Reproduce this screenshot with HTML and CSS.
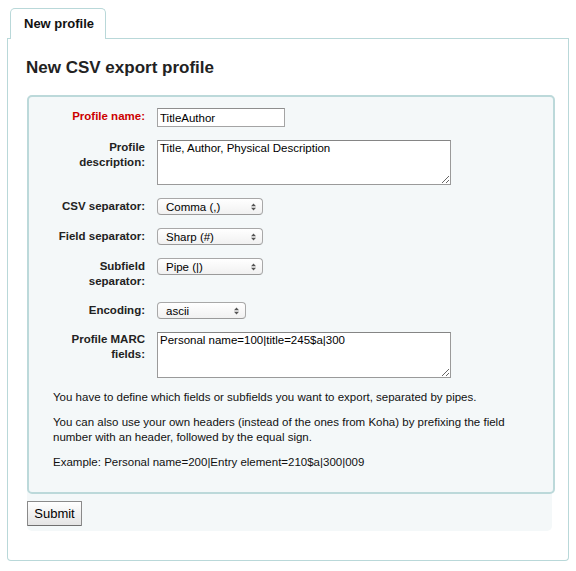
FILE: index.html
```html
<!DOCTYPE html>
<html lang="en">
<head>
<meta charset="utf-8">
<title>New CSV export profile</title>
<link rel="stylesheet" href="styles.css">
</head>
<body>
<div class="page">
  <div class="tabrow">
    <div class="tab">New profile</div>
  </div>
  <div class="panel">
    <h1 class="title">New CSV export profile</h1>
    <form class="form">
      <fieldset class="rows">
        <div class="row">
          <label class="lbl lbl-input required" for="pname">Profile name:</label>
          <input class="text" id="pname" type="text" value="TitleAuthor">
        </div>
        <div class="row">
          <label class="lbl" for="pdesc">Profile description:</label>
          <textarea class="area area-desc" id="pdesc">Title, Author, Physical Description</textarea>
        </div>
        <div class="row">
          <label class="lbl lbl-select" for="csvsep">CSV separator:</label>
          <span class="selectwrap">
            <select class="select" id="csvsep"><option>Comma (,)</option></select>
            <svg class="arrows" width="5" height="8" viewBox="0 0 5 8"><path d="M0 3.2 L2.5 0.5 L5 3.2Z M0 4.8 L2.5 7.5 L5 4.8Z" fill="#555"/></svg>
          </span>
        </div>
        <div class="row">
          <label class="lbl lbl-select" for="fieldsep">Field separator:</label>
          <span class="selectwrap">
            <select class="select" id="fieldsep"><option>Sharp (#)</option></select>
            <svg class="arrows" width="5" height="8" viewBox="0 0 5 8"><path d="M0 3.2 L2.5 0.5 L5 3.2Z M0 4.8 L2.5 7.5 L5 4.8Z" fill="#555"/></svg>
          </span>
        </div>
        <div class="row">
          <label class="lbl lbl-select" for="subsep">Subfield separator:</label>
          <span class="selectwrap">
            <select class="select" id="subsep"><option>Pipe (|)</option></select>
            <svg class="arrows" width="5" height="8" viewBox="0 0 5 8"><path d="M0 3.2 L2.5 0.5 L5 3.2Z M0 4.8 L2.5 7.5 L5 4.8Z" fill="#555"/></svg>
          </span>
        </div>
        <div class="row">
          <label class="lbl lbl-select" for="enc">Encoding:</label>
          <span class="selectwrap">
            <select class="select select-short" id="enc"><option>ascii</option></select>
            <svg class="arrows" width="5" height="8" viewBox="0 0 5 8"><path d="M0 3.2 L2.5 0.5 L5 3.2Z M0 4.8 L2.5 7.5 L5 4.8Z" fill="#555"/></svg>
          </span>
        </div>
        <div class="row">
          <label class="lbl" for="marc">Profile MARC fields:</label>
          <textarea class="area area-marc" id="marc">Personal name=100|title=245$a|300</textarea>
        </div>
        <div class="notes">
          <p>You have to define which fields or subfields you want to export, separated by pipes.</p>
          <p>You can also use your own headers (instead of the ones from Koha) by prefixing the field number with an header, followed by the equal sign.</p>
          <p>Example: Personal name=200|Entry element=210$a|300|009</p>
        </div>
      </fieldset>
      <div class="action">
        <button class="btn" type="button">Submit</button>
      </div>
    </form>
  </div>
</div>
</body>
</html>
```

FILE: styles.css
```css
html, body {
  margin: 0;
  padding: 0;
  background: #ffffff;
}

body {
  font-family: "Liberation Sans", Arial, Helvetica, sans-serif;
  color: #222222;
}

.page {
  padding: 8px 7px 0 7px;
}

.tabrow {
  display: flex;
  align-items: stretch;
}

.tabrow::before {
  content: "";
  width: 3px;
  border-bottom: 1px solid #b9d8d9;
}

.tabrow::after {
  content: "";
  flex: 1;
  border-bottom: 1px solid #b9d8d9;
}

.tab {
  box-sizing: border-box;
  width: 96px;
  height: 31px;
  padding: 7px 0 0 13px;
  border: 1px solid #b9d8d9;
  border-bottom: none;
  border-radius: 5px 5px 0 0;
  background: #ffffff;
  font-size: 13px;
  font-weight: bold;
  line-height: 15px;
  color: #111111;
}

.panel {
  border: 1px solid #b9d8d9;
  border-top: none;
  border-radius: 0 0 4px 4px;
  padding: 19px 13px 29px 19px;
}

.title {
  margin: 0 0 17px -1px;
  font-size: 17px;
  line-height: 20px;
  font-weight: bold;
  color: #222222;
}

.form {
  margin: 0;
}

.rows {
  margin: 0;
  border: 2px solid #bcd9da;
  border-radius: 5px;
  background: #f4f8f9;
  padding: 11px 12px 12px 24px;
  min-width: 0;
  position: relative;
  z-index: 1;
}

.row {
  display: flex;
  align-items: flex-start;
  gap: 12px;
  margin-bottom: 13px;
}

.lbl {
  width: 92px;
  flex: none;
  text-align: right;
  font-size: 11.5px;
  font-weight: bold;
  line-height: 15px;
  color: #222222;
}

.lbl-input {
  padding-top: 1px;
}

.lbl-select {
  padding-top: 1px;
}

.required {
  color: #cc0000;
}

.text {
  box-sizing: border-box;
  width: 128px;
  height: 19px;
  margin: 0;
  padding: 0 2px;
  border: 1px solid #a4a4a4;
  border-top-color: #8e8e8e;
  background: #ffffff;
  font-family: "Liberation Sans", Arial, sans-serif;
  font-size: 11.5px;
  color: #000000;
}

.area {
  box-sizing: border-box;
  display: block;
  width: 294px;
  margin: 0;
  padding: 0 2px;
  border: 1px solid #9a9a9a;
  border-top-color: #858585;
  background: #ffffff;
  font-family: "Liberation Sans", Arial, sans-serif;
  font-size: 11.5px;
  line-height: 14px;
  color: #000000;
}

.area-desc {
  height: 45px;
}

.area-marc {
  height: 46px;
}

.selectwrap {
  position: relative;
  display: block;
  height: 17px;
}

.select {
  appearance: none;
  -webkit-appearance: none;
  display: block;
  box-sizing: border-box;
  width: 106px;
  height: 17px;
  margin: 0;
  padding: 1px 14px 0 8px;
  border: 1px solid #a8a8a8;
  border-bottom-color: #9a9a9a;
  border-radius: 4px;
  background: linear-gradient(#ffffff, #f1f1f1);
  font-family: "Liberation Sans", Arial, sans-serif;
  font-size: 11.5px;
  line-height: 13px;
  color: #000000;
}

.select-short {
  width: 89px;
}

.arrows {
  position: absolute;
  right: 7px;
  top: 5px;
  pointer-events: none;
}

.notes {
  margin-top: -1px;
  padding-right: 2px;
}

.notes p {
  margin: 0 0 10px 0;
  font-size: 11.5px;
  line-height: 15px;
  color: #111111;
}

.action {
  width: 525px;
  box-sizing: border-box;
  margin-top: -6px;
  padding: 13px 0 5px 0;
  background: #f4f8f9;
  border-radius: 0 0 5px 5px;
}

.btn {
  display: block;
  box-sizing: border-box;
  width: 55px;
  height: 25px;
  margin: 0;
  padding: 0;
  border: 1px solid #8a8a8a;
  border-bottom-color: #6f6f6f;
  border-radius: 1px;
  background: linear-gradient(#ffffff, #e4e4e4);
  font-family: "Liberation Sans", Arial, sans-serif;
  font-size: 13px;
  color: #000000;
}
```
